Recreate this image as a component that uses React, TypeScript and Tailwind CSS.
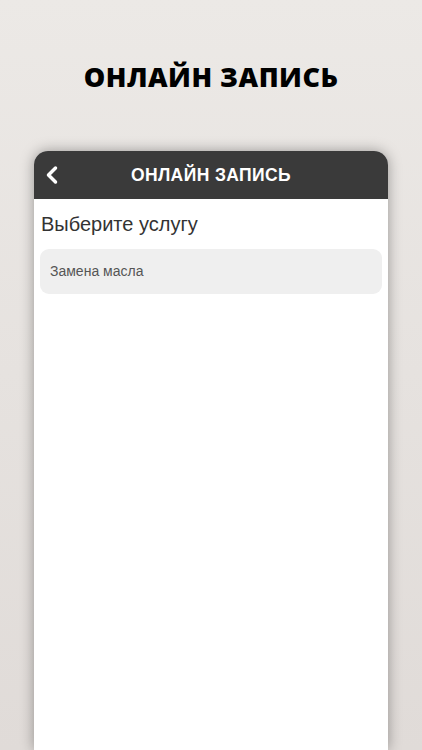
import { ChevronLeft } from "lucide-react";

export default function App() {
  return (
    <div className="w-[422px] h-[750px] overflow-hidden flex flex-col items-center bg-gradient-to-b from-[#ece9e6] to-[#e0dbd8] font-['Open_Sans',sans-serif]">
      <h1 className="mt-[58px] text-[27px] leading-[38px] font-extrabold tracking-[0.5px] text-black">
        ОНЛАЙН ЗАПИСЬ
      </h1>

      {/* Phone frame */}
      <div className="mt-[55px] w-[354px] flex-1 flex flex-col rounded-t-[14px] overflow-hidden bg-white shadow-[0_0_14px_rgba(0,0,0,0.35)]">
        <div className="h-[48px] bg-[#3a3a3a] flex items-center relative">
          <ChevronLeft size={28} strokeWidth={3} className="absolute left-[4px] text-white" />
          <span className="w-full text-center text-white text-[17.5px] font-bold font-['Liberation_Sans',sans-serif] tracking-[0.4px]">
            ОНЛАЙН ЗАПИСЬ
          </span>
        </div>
        <div className="px-[6px] pt-[12px] font-['Liberation_Sans',sans-serif]">
          <h2 className="text-[20px] leading-[26px] text-[#333] pl-[1px]">Выберите услугу</h2>
          <div className="mt-[12px] h-[45px] rounded-[9px] bg-[#efefef] flex items-center px-[10px] text-[14px] text-[#555]">
            Замена масла
          </div>
        </div>
      </div>
    </div>
  );
}
